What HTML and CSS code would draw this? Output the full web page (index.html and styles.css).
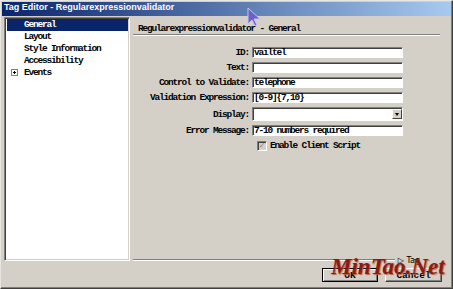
FILE: index.html
```html
<!DOCTYPE html>
<html>
  <head>
    <title>Tag Editor</title>
    <meta charset="utf-8" />
    <link rel="stylesheet" href="styles.css">
  </head>
  <body>
    <div class="window">
      <div class="titlebar">Tag Editor - Regularexpressionvalidator</div>
      <div class="main">
        <ul class="tree">
          <li class="selected">General</li>
          <li>Layout</li>
          <li>Style Information</li>
          <li>Accessibility</li>
          <li><span class="plus"></span>Events</li>
        </ul>
        <div class="pane">
          <div class="pane-head">Regularexpressionvalidator - General</div>
          <div class="form">
            <label>ID:</label>
            <div class="field">vailtel</div>
            <label>Text:</label>
            <div class="field"></div>
            <label>Control to Validate:</label>
            <div class="field">telephone</div>
            <label>Validation Expression:</label>
            <div class="field">[0-9]{7,10}</div>
            <label>Display:</label>
            <div class="field select"><span class="drop"></span></div>
            <label>Error Message:</label>
            <div class="field">7-10 numbers required</div>
            <span></span>
            <div class="check"><span class="box">&#10003;</span>Enable Client Script</div>
          </div>
          <div class="pane-foot">
            <span class="rule"></span>
            <span class="tag">&#9655; Tag</span>
          </div>
        </div>
      </div>
      <div class="buttons">
        <button class="default">OK</button>
        <button>Cancel</button>
      </div>
    </div>
    <div class="watermark">MinTao.Net</div>
    <svg class="cursor" width="16" height="20" viewBox="0 0 16 20">
      <polygon points="1,1 1,17 5,13 8,19 10,18 7,12 13,12" fill="#6a62c8" stroke="#c8c4ec" stroke-width="1" />
    </svg>
  </body>
</html>
```

FILE: styles.css
```css
html,
body {
  margin: 0;
  padding: 0;
  width: 453px;
  height: 289px;
  overflow: hidden;
  background: #d4d0c8;
  font: bold 9.5px "Liberation Mono", monospace;
  letter-spacing: -1.2px;
  color: #000;
}
.window {
  width: 453px;
  height: 289px;
  box-sizing: border-box;
  border: 1px solid;
  border-color: #e8e6e0 #404040 #404040 #e8e6e0;
  box-shadow: inset -1px -1px #808080;
}
.titlebar {
  margin: 1px 1px 0;
  height: 14px;
  padding-left: 2px;
  line-height: 14px;
  font: bold 9px "Liberation Sans", sans-serif;
  letter-spacing: 0;
  color: #fff;
  background: linear-gradient(to right, #0a246a, #a6caf0);
}
.main {
  display: flex;
  align-items: flex-start;
  height: 247px;
  margin-top: 1px;
  padding: 0 7px 0 3px;
}
.tree {
  list-style: none;
  margin: 0;
  padding: 0 0 0 2px;
  width: 126px;
  height: 244px;
  box-sizing: border-box;
  background: #fff;
  border: 1px solid;
  border-color: #808080 #fff #fff #808080;
  box-shadow: inset 1px 1px #404040, inset -1px -1px #d4d0c8;
  padding-top: 1px;
}
.tree li {
  height: 12px;
  line-height: 12px;
  padding-left: 17px;
  margin-right: 1px;
  position: relative;
}
.tree li.selected {
  background: #0a246a;
  color: #fff;
}
.plus {
  position: absolute;
  left: 4px;
  top: 2px;
  width: 7px;
  height: 7px;
  border: 1px solid #808080;
  box-sizing: border-box;
  background: linear-gradient(#000, #000) center/3px 1px no-repeat,
    linear-gradient(#000, #000) center/1px 3px no-repeat, #fff;
}
.pane {
  flex: 1;
  align-self: stretch;
  display: flex;
  flex-direction: column;
  margin-left: 3px;
}
.pane-head {
  padding: 6px 0 0 5px;
  line-height: 11px;
  margin-right: 5px;
  border-bottom: 1px solid #808080;
  box-shadow: 0 1px #fff;
}
.form {
  display: grid;
  grid-template-columns: 116px 151px;
  column-gap: 3px;
  row-gap: 4px;
  margin-top: 12px;
  align-items: center;
}
.form label {
  text-align: right;
  line-height: 11px;
}
.field {
  height: 11px;
  box-sizing: border-box;
  padding-left: 1px;
  line-height: 9px;
  background: #fff;
  border: 1px solid;
  border-color: #808080 #fff #fff #808080;
  box-shadow: inset 1px 1px #404040;
  white-space: nowrap;
  overflow: hidden;
}
.field.select {
  height: 14px;
  position: relative;
}
.drop {
  position: absolute;
  right: 0;
  top: 1px;
  width: 10px;
  height: 10px;
  background: #d4d0c8;
  border: 1px solid;
  border-color: #fff #404040 #404040 #fff;
  box-sizing: border-box;
}
.drop::after {
  content: "";
  position: absolute;
  left: 2px;
  top: 3px;
  border: 2px solid transparent;
  border-top: 3px solid #000;
}
.check {
  display: flex;
  align-items: center;
  line-height: 11px;
}
.box {
  width: 10px;
  height: 10px;
  box-sizing: border-box;
  margin: 0 3px 0 5px;
  border: 1px solid;
  border-color: #808080 #fff #fff #808080;
  box-shadow: inset 1px 1px #404040;
  background: #d4d0c8;
  color: #808080;
  font: bold 8px "DejaVu Sans", sans-serif;
  letter-spacing: 0;
  line-height: 8px;
  text-align: center;
}
.pane-foot {
  margin-top: auto;
  height: 8px;
  display: flex;
  align-items: center;
  padding-right: 25px;
}
.rule {
  flex: 1;
  border-top: 1px solid #808080;
  border-bottom: 1px solid #fff;
}
.tag {
  margin-left: 3px;
  font: 8px "DejaVu Sans", sans-serif;
  letter-spacing: 0;
}
.buttons {
  display: flex;
  justify-content: flex-end;
  gap: 7px;
  margin-top: 4px;
  padding-right: 10px;
}
.buttons button {
  width: 57px;
  height: 14px;
  padding: 0;
  font: inherit;
  background: #d4d0c8;
  border: 1px solid;
  border-color: #fff #404040 #404040 #fff;
  box-shadow: inset -1px -1px #808080;
}
.buttons button.default {
  width: 56px;
  border-color: #000;
  box-shadow: inset 1px 1px #fff, inset -1px -1px #808080;
}
.watermark {
  position: absolute;
  left: 331px;
  top: 254px;
  font: bold italic 23px "Liberation Serif", serif;
  letter-spacing: 0;
  color: #8a1a1a;
  text-shadow: 1px 1px 1px #c06040;
}
.cursor {
  position: absolute;
  left: 247px;
  top: 7px;
}
```
